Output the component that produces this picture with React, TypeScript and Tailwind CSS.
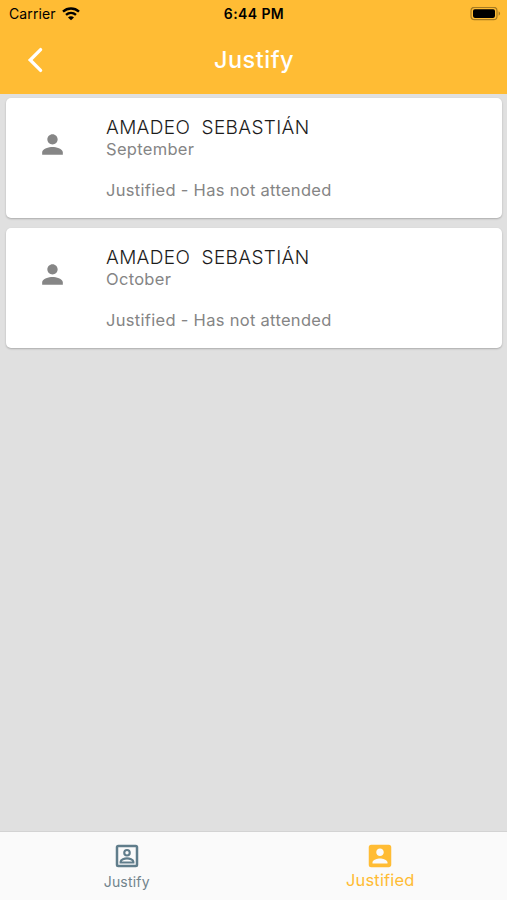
const records = [
  { name: 'AMADEO  SEBASTIÁN', month: 'September', status: 'Justified - Has not attended' },
  { name: 'AMADEO  SEBASTIÁN', month: 'October', status: 'Justified - Has not attended' },
]

function StatusBar() {
  return (
    <div className="grid h-[27px] grid-cols-[1fr_auto_1fr] items-center pr-[8px] pl-[9px] text-black">
      <div className="flex items-center gap-[6px]">
        <span className="text-[14px] leading-[17px] tracking-[0.1px]">Carrier</span>
        <svg className="h-[14px] w-[18px]" viewBox="0 0 18 14" fill="none" stroke="currentColor" strokeWidth="2.4">
          <path d="M1 4.6C5.6.4 12.4.4 17 4.6" />
          <path d="M4 7.9c2.9-2.5 7.1-2.5 10 0" />
          <path d="M9 13.2 6 10.4c1.7-1.5 4.3-1.5 6 0z" fill="currentColor" stroke="none" />
        </svg>
      </div>
      <span className="text-center text-[14px] leading-[17px] font-semibold tracking-[0.4px]">6:44 PM</span>
      <svg className="-mr-[2px] h-[14px] w-[31px] justify-self-end" viewBox="0 0 31 14">
        <rect x="1" y=".3" width="26" height="12.4" rx="3.5" fill="none" stroke="#a67b22" strokeWidth="1.2" />
        <rect x="3" y="2.3" width="22" height="8.6" rx="1.8" fill="#000" />
        <path d="M28.6 4.3c2 .9 2 3.5 0 4.4z" fill="#a67b22" />
      </svg>
    </div>
  )
}

function Header() {
  return (
    <header className="h-[94px] bg-[#ffbc34]">
      <StatusBar />
      <div className="grid h-[65px] grid-cols-3 items-center text-white">
        <svg className="ml-[27px] h-[26px] w-[17px]" viewBox="0 0 17 26" fill="none" stroke="currentColor" strokeWidth="3.3">
          <path d="M13.6 2.6 3.2 13l10.4 10.4" strokeLinecap="round" strokeLinejoin="miter" />
        </svg>
        <h1 className="pl-px text-center text-[23.5px] leading-[28px] font-medium tracking-[0.5px]">Justify</h1>
      </div>
    </header>
  )
}

function Card({ name, month, status }: { name: string; month: string; status: string }) {
  return (
    <li className="flex h-[120px] rounded-[5px] bg-white shadow-[0_1px_2px_rgba(0,0,0,0.24)]">
      <div className="flex w-[100px] pt-[31px] pl-[31px]">
        <svg className="size-[31px]" viewBox="0 0 24 24" fill="#868686">
          <path d="M12 12c2.21 0 4-1.79 4-4s-1.79-4-4-4-4 1.79-4 4 1.79 4 4 4zm0 2c-2.67 0-8 1.34-8 4v2h16v-2c0-2.66-5.33-4-8-4z" />
        </svg>
      </div>
      <div className="pt-[18px]">
        <h2 className="text-[19px] leading-[24px] font-[350] tracking-[0.35px] whitespace-pre text-[#1c1c1c]">{name}</h2>
        <p className="-mt-px text-[16.5px] leading-[20px] tracking-[0.3px] text-[#858585]">{month}</p>
        <p className="mt-[21px] text-[16.5px] leading-[20px] tracking-[0.3px] text-[#858585]">{status}</p>
      </div>
    </li>
  )
}

function TabBar() {
  return (
    <nav className="grid h-[69px] grid-cols-2 border-t border-[#d3d3d3] bg-[#fafafa]">
      <button className="flex flex-col items-center pt-[8.5px] text-[#607d8b]">
        <svg className="size-[30px]" viewBox="0 0 24 24" fill="none" stroke="currentColor">
          <rect x="4" y="4" width="16" height="16" rx="1" strokeWidth="2" />
          <circle cx="12" cy="9.4" r="2.2" strokeWidth="1.7" />
          <path d="M6.9 17.2v-.6c0-1.7 3.2-2.7 5.1-2.7s5.1 1 5.1 2.7v.6z" strokeWidth="1.7" />
        </svg>
        <span className="mt-[2px] text-[14px] leading-[18px] tracking-[0.2px] text-[#71838c]">Justify</span>
      </button>
      <button className="flex flex-col items-center pt-[8.5px] text-[#ffbc34]">
        <svg className="size-[30px]" viewBox="0 0 24 24" fill="currentColor">
          <path d="M3 5v14a2 2 0 0 0 2 2h14c1.1 0 2-.9 2-2V5a2 2 0 0 0-2-2H5a2 2 0 0 0-2 2zm12 4c0 1.66-1.34 3-3 3s-3-1.34-3-3 1.34-3 3-3 3 1.34 3 3zm-9 8c0-2 4-3.1 6-3.1s6 1.1 6 3.1v1H6v-1z" />
        </svg>
        <span className="-mt-px text-[16.5px] leading-[20px] tracking-[0.15px]">Justified</span>
      </button>
    </nav>
  )
}

export default function App() {
  return (
    <div className="flex h-[900px] w-[507px] flex-col overflow-hidden bg-[#e0e0e0] font-['Inter',sans-serif]">
      <Header />
      <main className="flex-1 pt-[4px] pr-[5px] pl-[6px]">
        <ul className="flex flex-col gap-[10px]">
          {records.map((record) => (
            <Card key={record.month} {...record} />
          ))}
        </ul>
      </main>
      <TabBar />
    </div>
  )
}
